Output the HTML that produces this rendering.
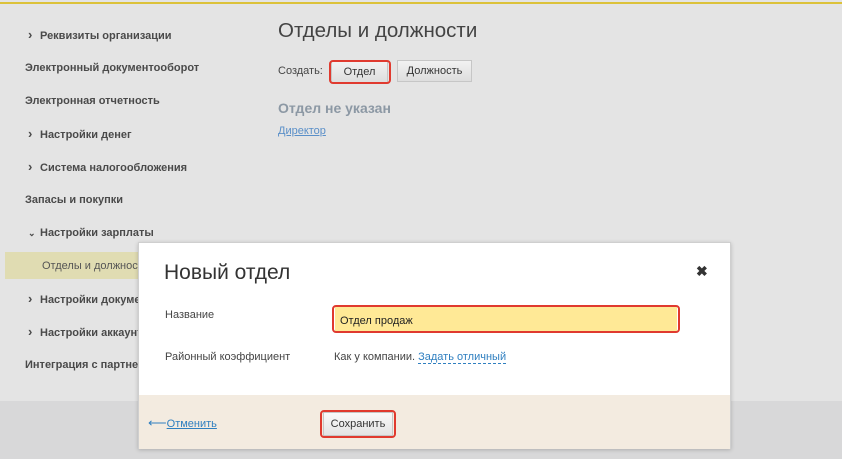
<!DOCTYPE html>
<html><head><meta charset="utf-8"><style>
*{margin:0;padding:0;box-sizing:border-box}
body{width:842px;height:459px;overflow:hidden;background:#e4e4e4;font-family:"Liberation Sans",Arial,sans-serif;position:relative;color:#444}
.top{position:absolute;left:0;top:0;width:842px;height:4px;background:#e4e4e4;border-bottom:2px solid #dcc23a}
.bot{position:absolute;left:0;top:401px;width:842px;height:58px;background:#d8d8d9}
.nav{position:absolute;left:25px;font-size:11px;font-weight:bold;color:#4a4a4a}
.nav.c{left:28px}
.nav.c:before{content:"›";display:inline-block;width:12px;font-size:13px;line-height:11px}
.hl{position:absolute;left:5px;top:252px;width:133px;height:27px;background:#e0dcb2}
.t{position:absolute;font-size:11px}
.btn{position:absolute;height:22px;border:1px solid #c6c6c6;background:linear-gradient(#f2f2f2,#dedede);font-size:11px;color:#333;text-align:center;line-height:20px}
.red{position:absolute;border:2px solid #e03a2f;border-radius:4px}
.modal{position:absolute;left:138px;top:242px;width:593px;height:207px;background:#fff;border:1px solid #cfcfcf;box-shadow:0 1px 4px rgba(0,0,0,.2)}
.foot{position:absolute;left:0;top:153px;width:100%;height:53px;background:#f3ebe0}
a{color:#2f7fc0}
</style></head><body>
<div class="top"></div>
<div class="bot"></div>
<div class="nav c" style="top:29px">Реквизиты организации</div>
<div class="nav" style="top:62px">Электронный документооборот</div>
<div class="nav" style="top:95px">Электронная отчетность</div>
<div class="nav c" style="top:128px">Настройки денег</div>
<div class="nav c" style="top:161px">Система налогообложения</div>
<div class="nav" style="top:194px">Запасы и покупки</div>
<div class="nav" style="top:227px;left:28px"><span style="display:inline-block;width:12px;font-size:9px">⌄</span>Настройки зарплаты</div>
<div class="hl"></div>
<div class="t" style="left:42px;top:260px;color:#555">Отделы и должност</div>
<div class="nav c" style="top:293px">Настройки докуме</div>
<div class="nav c" style="top:326px">Настройки аккаунт</div>
<div class="nav" style="top:359px">Интеграция с партнер</div>

<div class="t" style="left:278px;top:19px;font-size:20.5px;color:#444">Отделы и должности</div>
<div class="t" style="left:278px;top:65px;color:#444">Создать:</div>
<div class="btn" style="left:331px;top:61px;width:57px">Отдел</div>
<div class="red" style="left:329px;top:60px;width:62px;height:24px"></div>
<div class="btn" style="left:397px;top:60px;width:75px">Должность</div>
<div class="t" style="left:278px;top:100px;font-size:14px;font-weight:bold;color:#8c98a4">Отдел не указан</div>
<div class="t" style="left:278px;top:125px"><a style="color:#5a8fc8;text-decoration:underline">Директор</a></div>

<div class="modal">
 <div class="t" style="left:25px;top:18px;font-size:21px;color:#333">Новый отдел</div>
 <div class="t" style="left:557px;top:20px;font-size:14px;font-weight:bold;color:#333">✖</div>
 <div class="t" style="left:26px;top:66px;color:#444">Название</div>
 <div style="position:absolute;left:196px;top:64px;width:342px;height:25px;background:#ffe996;border-bottom:1px solid #bbb"></div>
 <div class="red" style="left:193px;top:62px;width:348px;height:28px;border-width:2px"></div>
 <div class="t" style="left:201px;top:72px;color:#222">Отдел продаж</div>
 <div class="t" style="left:26px;top:108px;color:#444">Районный коэффициент</div>
 <div class="t" style="left:195px;top:108px;color:#444">Как у компании. <span style="color:#2f7fc0;border-bottom:1px dashed #2f7fc0">Задать отличный</span></div>
 <div class="foot" style="top:152px;height:54px">
  <div class="t" style="left:9px;top:20px"><span style="color:#2f7fc0;font-size:13px">⟵</span><a style="text-decoration:underline">Отменить</a></div>
  <div class="btn" style="left:184px;top:17px;width:70px;height:24px;line-height:22px;background:linear-gradient(#fafafa,#e4e4e4)">Сохранить</div>
  <div class="red" style="left:181px;top:15px;width:76px;height:28px"></div>
 </div>
</div>
</body></html>
